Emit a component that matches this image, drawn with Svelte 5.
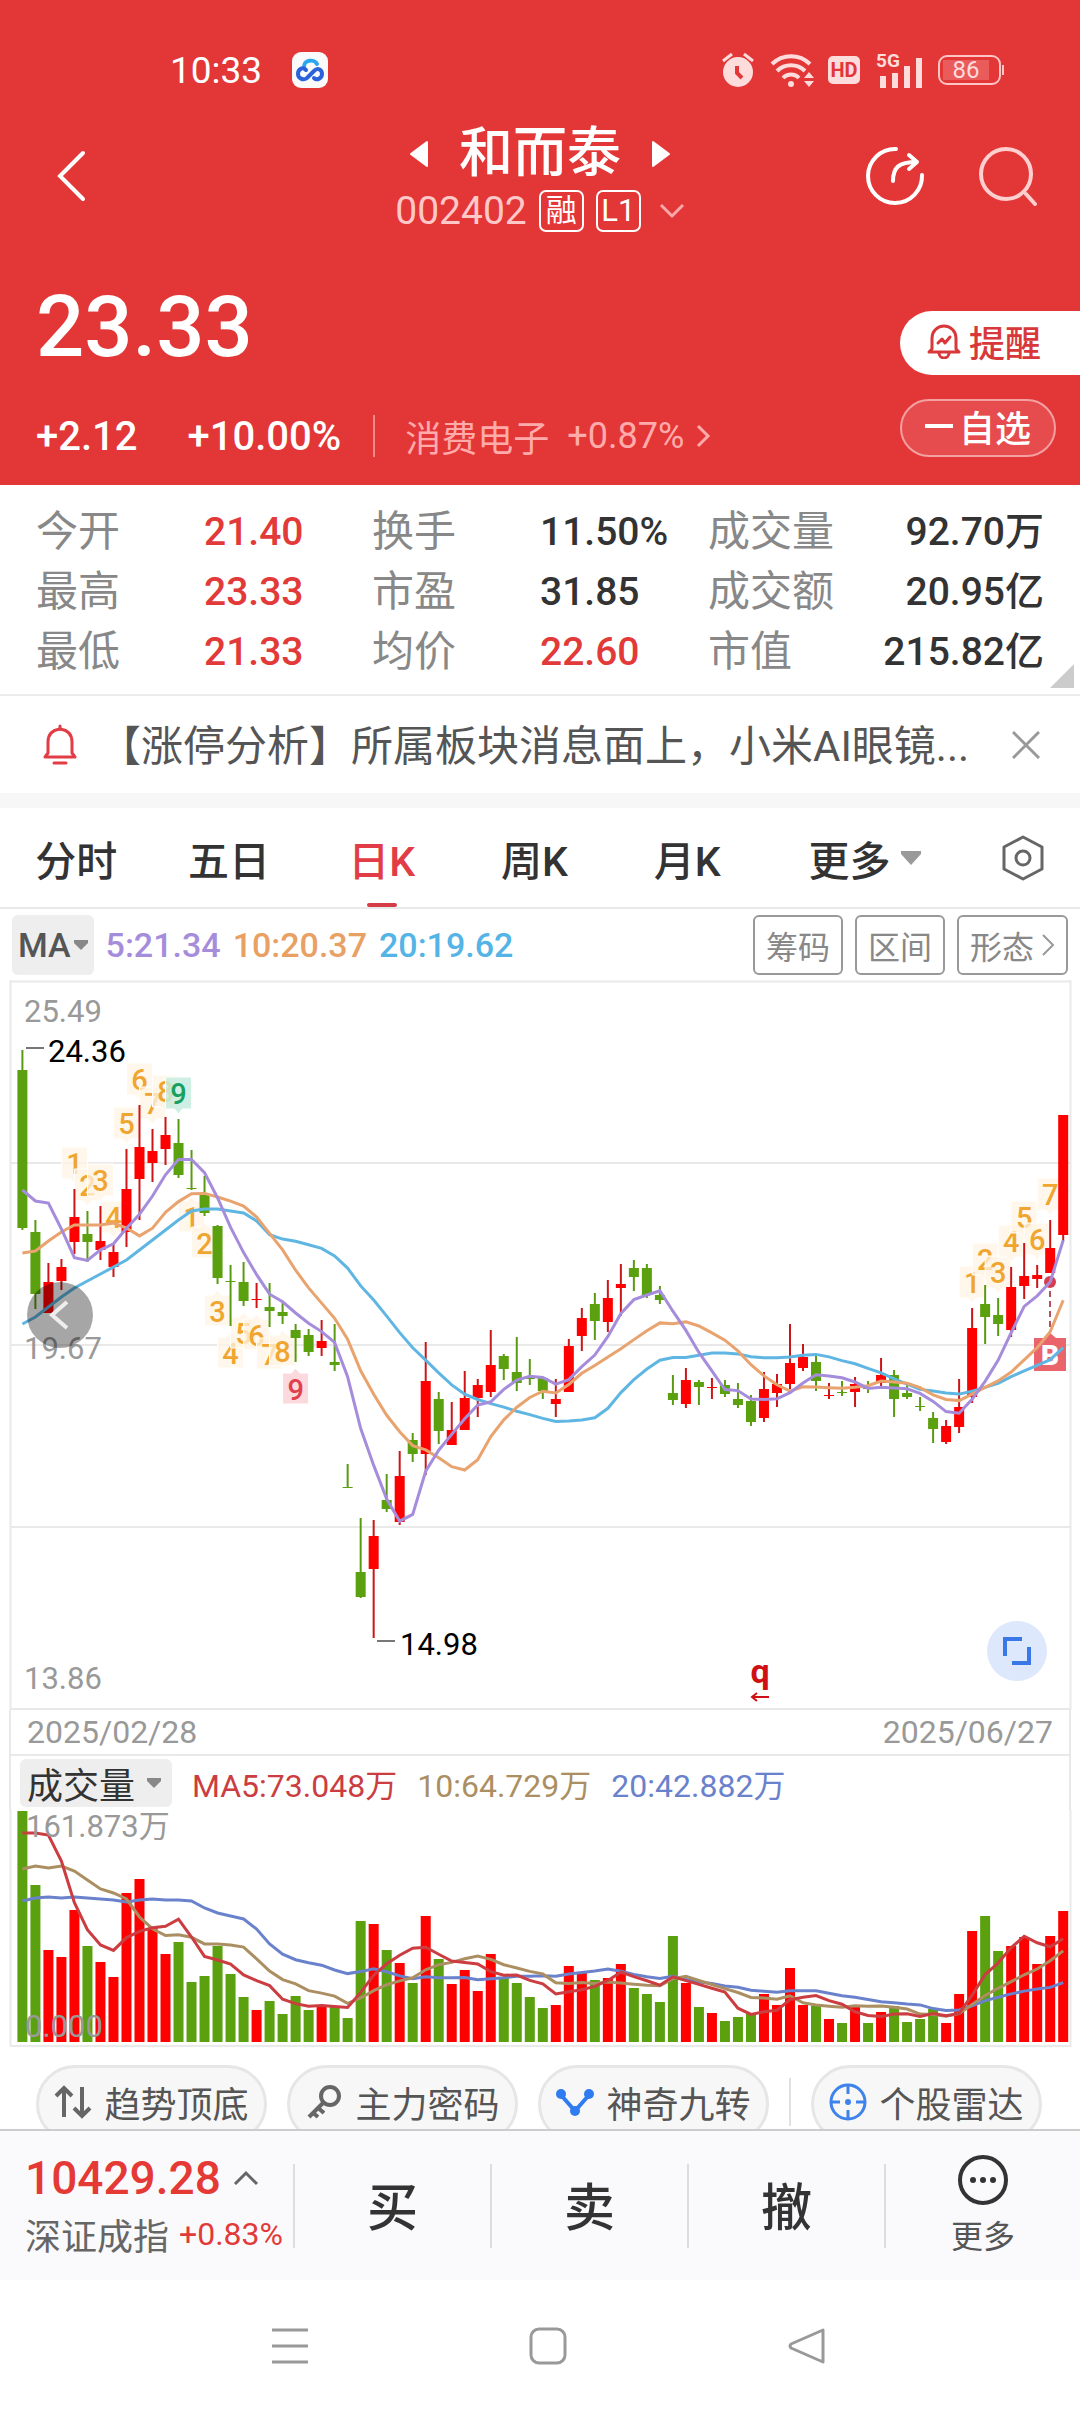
<script>
  // [high, body top, body bottom, low, rising] in chart units
  const candles = [
    [70, 90, 248, 250, 0], [240, 252, 314, 329, 0], [283, 302, 333, 333, 1], [279, 287, 301, 310, 1],
    [209, 237, 262, 274, 1], [231, 254, 262, 282, 0], [226, 261, 270, 280, 1], [263, 272, 287, 297, 1],
    [169, 209, 252, 267, 1], [125, 167, 199, 240, 1], [149, 171, 183, 202, 1], [137, 155, 169, 185, 1],
    [139, 163, 195, 198, 0], [170, 208, 209, 210, 0], [196, 215, 233, 236, 0], [245, 246, 298, 304, 0],
    [285, 301, 302, 346, 0], [282, 302, 321, 326, 0], [303, 319, 320, 328, 1], [303, 327, 331, 347, 0],
    [322, 332, 336, 344, 0], [344, 350, 358, 382, 0], [349, 355, 372, 376, 0], [340, 361, 368, 376, 1],
    [344, 382, 385, 391, 0], [484, 507, 508, 508, 0], [538, 592, 617, 618, 0], [540, 556, 589, 658, 1],
    [494, 520, 529, 532, 0], [471, 496, 542, 545, 1], [453, 460, 474, 482, 0], [362, 401, 474, 495, 1],
    [412, 419, 451, 464, 0], [422, 450, 465, 465, 1], [391, 418, 450, 450, 1], [399, 405, 418, 437, 1],
    [350, 385, 412, 417, 1], [374, 376, 389, 400, 0], [357, 392, 403, 411, 0], [379, 397, 399, 405, 0],
    [397, 398, 411, 419, 0], [399, 419, 424, 437, 1], [359, 366, 412, 412, 1], [328, 338, 356, 371, 1],
    [313, 324, 341, 360, 0], [300, 318, 342, 352, 1], [284, 304, 308, 336, 1], [280, 288, 297, 311, 0],
    [284, 288, 315, 318, 0], [306, 315, 320, 324, 0], [395, 413, 420, 425, 0], [388, 400, 424, 428, 1],
    [400, 402, 407, 425, 0], [398, 407, 408, 419, 1], [400, 405, 414, 417, 0], [403, 419, 425, 428, 0],
    [415, 421, 442, 446, 0], [392, 409, 438, 442, 1], [394, 404, 413, 427, 1], [344, 383, 404, 409, 1],
    [364, 377, 388, 391, 1], [376, 382, 401, 411, 0], [403, 415, 416, 419, 1], [401, 412, 413, 416, 0],
    [397, 404, 412, 427, 1], [401, 408, 409, 413, 0], [378, 395, 403, 406, 1], [390, 395, 419, 437, 0],
    [404, 413, 417, 419, 0], [417, 426, 427, 431, 0], [432, 438, 449, 463, 0], [440, 446, 462, 464, 1],
    [399, 427, 447, 453, 1], [328, 348, 417, 423, 1], [305, 324, 337, 364, 0], [318, 335, 344, 356, 0],
    [287, 307, 350, 357, 1], [263, 296, 306, 319, 1], [285, 295, 299, 308, 1], [240, 268, 293, 293, 1],
    [135, 135, 255, 261, 1]
  ].map(([high, top, bottom, low, up]) => ({ high, top, bottom, low, up }));

  const volumes = [
    231, 157, 92, 85, 132, 96, 80, 65, 149, 163, 114, 88, 100, 60, 66, 96, 68, 45, 32, 41,
    28, 46, 32, 35, 36, 24, 121, 118, 92, 79, 59, 126, 83, 58, 72, 51, 88, 65, 59, 45,
    34, 37, 76, 69, 62, 64, 78, 54, 48, 40, 106, 59, 35, 29, 21, 25, 28, 48, 37, 74,
    37, 36, 23, 19, 36, 19, 30, 36, 20, 23, 33, 19, 48, 111, 126, 91, 96, 105, 78, 106, 131
  ];

  const x = (i) => 22.4 + i * 13.01;

  // lead holds the averages that depend on days before the first candle
  const average = (values, n, lead) =>
    values.map((_, i) =>
      i < n - 1 ? lead[i] : values.slice(i - n + 1, i + 1).reduce((a, b) => a + b, 0) / n
    );
  const points = (ys) => ys.map((y, i) => `${x(i).toFixed(1)},${y.toFixed(1)}`).join(' ');

  const closes = candles.map((c) => (c.up ? c.top : c.bottom));
  const priceLines = [
    { color: '#5fb6e2', points: points(average(closes, 20, [344, 337, 327, 317, 308, 301, 294, 287, 280, 270, 260, 250, 240, 231, 229, 229, 231, 233, 241])) },
    { color: '#e9a36e', points: points(average(closes, 10, [273, 271, 261, 252, 245, 245, 245, 243, 248])) },
    { color: '#a58ddc', points: points(average(closes, 5, [210, 221, 223, 249])) }
  ];

  const volumeBase = 232;
  const volumePoints = (n, lead) => points(average(volumes, n, lead).map((v) => volumeBase - v));
  const volumeLines = [
    { color: '#6a82cb', points: volumePoints(20, [141, 144, 145, 144, 145, 144, 143, 142, 140, 142, 143, 142, 142, 141, 134, 129, 126, 123, 113]) },
    { color: '#ab8f62', points: volumePoints(10, [173, 176, 174, 176, 171, 162, 153, 149, 143]) },
    { color: '#cb3d40', points: volumePoints(5, [209, 209, 207, 181]) }
  ];

  // nine-turn counts: first candle, how many, side
  const badges = [
    { start: 4, count: 9, above: true },
    { start: 13, count: 9, above: false },
    { start: 73, count: 7, above: true }
  ].flatMap(({ start, count, above }) =>
    Array.from({ length: count }, (_, k) => {
      const c = candles[start + k];
      return {
        n: k + 1,
        above,
        x: x(start + k),
        y: above ? c.high - 42 : c.low + 11,
        kind: k < 8 ? 'count' : above ? 'sell' : 'buy'
      };
    })
  );

  const stats = [
    ['今开', '21.40', true], ['换手', '11.50%'], ['成交量', '92.70万'],
    ['最高', '23.33', true], ['市盈', '31.85'], ['成交额', '20.95亿'],
    ['最低', '21.33', true], ['均价', '22.60', true], ['市值', '215.82亿']
  ];

  const tabs = ['分时', '五日', '日K', '周K', '月K'];
  let activeTab = '日K';
</script>

<div class="page">
  <header>
    <div class="status">
      <span class="clock">10:33</span>
      <svg class="cloud" width="36" height="36" viewBox="0 0 36 36">
        <rect width="36" height="36" rx="9" fill="#fafafa" />
        <g fill="none" stroke-width="4" stroke-linecap="round">
          <path d="M12 16c-1-9 11-9 13-4" stroke="#2aa6ee" />
          <path d="M14 18c-4-4-8 0-8 4s5 7 9 4l7-7c4-4 8-1 8 3s-5 7-8 4" stroke="#2b62dc" />
        </g>
      </svg>
      <span class="fill"></span>
      <svg width="32" height="36" viewBox="0 0 32 36">
        <g fill="none" stroke="#ffdcdc" stroke-width="3">
          <path d="M1 9l9-7M31 9l-9-7" />
        </g>
        <circle cx="16" cy="20" r="15" fill="#ffdcdc" />
        <path d="M15 14v7l5 5" fill="none" stroke="#e33637" stroke-width="4" />
      </svg>
      <svg class="wifi" width="46" height="36" viewBox="0 0 46 36">
        <g fill="none" stroke="#ffdcdc" stroke-width="4">
          <path d="M2 12a27 27 0 0 1 38 0M7 19a20 20 0 0 1 28 0M13 26a11 11 0 0 1 16 0" />
        </g>
        <circle cx="21" cy="32" r="3" fill="#ffdcdc" />
        <path d="M34 26l5-6 5 6zM34 29h10l-5 6z" fill="#ffdcdc" />
      </svg>
      <span class="hd">HD</span>
      <svg class="signal" width="48" height="48" viewBox="0 -6 48 48">
        <text x="0" y="15" font-size="19" font-weight="700" fill="#ffdcdc">5G</text>
        <path d="M7 36v-12M19 36v-15M31 36v-22M43 36v-30" stroke="#ffdcdc" stroke-width="6" />
      </svg>
      <span class="battery"><span>86</span></span>
    </div>

    <div class="titlebar">
      <button aria-label="返回" class="back">
        <svg width="30" height="52" viewBox="0 0 30 52"><path d="M27 3L4 26l23 23" fill="none" stroke="#fff" stroke-width="4" stroke-linecap="round" /></svg>
      </button>
      <div class="name">
        <div class="name-row">
          <button aria-label="上一只"><svg width="20" height="28" viewBox="0 0 20 28"><path d="M18 2v24L2 14z" fill="#fff" stroke="#fff" stroke-width="2" stroke-linejoin="round" /></svg></button>
          <h1>和而泰</h1>
          <button aria-label="下一只"><svg width="20" height="28" viewBox="0 0 20 28"><path d="M2 2v24l16-12z" fill="#fff" stroke="#fff" stroke-width="2" stroke-linejoin="round" /></svg></button>
        </div>
        <div class="code-row">
          <span class="code">002402</span><span class="tag">融</span><span class="tag">L1</span>
          <svg width="26" height="16" viewBox="0 0 26 16"><path d="M2 2l11 11L24 2" fill="none" stroke="#f9a9a9" stroke-width="3" /></svg>
        </div>
      </div>
      <div class="tools">
        <button aria-label="分享">
          <svg width="60" height="60" viewBox="0 0 60 60">
            <g fill="none" stroke="#fff" stroke-width="4" stroke-linecap="round" stroke-linejoin="round">
              <path d="M31 3a27 27 0 1 0 26 26" />
              <path d="M28 35c0-13 5-19 24-19M44 9l8 7-8 7" />
            </g>
          </svg>
        </button>
        <button aria-label="搜索">
          <svg width="60" height="60" viewBox="0 0 60 60">
            <circle cx="29" cy="28" r="25" fill="none" stroke="#ffcfcf" stroke-width="4" />
            <path d="M49 48l9 10" stroke="#ffcfcf" stroke-width="4" stroke-linecap="round" />
          </svg>
        </button>
      </div>
    </div>

    <div class="quote">
      <div class="quote-main">
        <strong>23.33</strong>
        <div class="change">
          <span>+2.12</span><span class="pct">+10.00%</span>
          <a class="sector" href="#sector">消费电子 <b>+0.87%</b>
            <svg width="15" height="24" viewBox="0 0 15 24"><path d="M2 2l10 10L2 22" fill="none" stroke="#ffabab" stroke-width="3" /></svg>
          </a>
        </div>
      </div>
      <div class="quote-actions">
        <button class="remind">
          <svg width="34" height="36" viewBox="0 0 34 36">
            <g fill="none" stroke="#d9383a" stroke-width="3" stroke-linejoin="round" stroke-linecap="round">
              <path d="M5 26V15a12 12 0 0 1 24 0v11l3 3H2zM12 30a5 5 0 0 0 10 0" />
              <path d="M11 20l4-4 3 4 5-6" />
            </g>
          </svg>提醒
        </button>
        <button class="watch"><i></i>自选</button>
      </div>
    </div>
  </header>

  <dl class="stats">
    {#each stats as [label, value, red]}
      <div><dt>{label}</dt><dd class:red>{value}</dd></div>
    {/each}
  </dl>

  <div class="notice">
    <svg width="34" height="42" viewBox="0 0 34 42">
      <g fill="none" stroke="#e23c46" stroke-width="3" stroke-linejoin="round" stroke-linecap="round">
        <path d="M2 33l3-4V18C5 10 10 6 17 5c7 1 12 5 12 13v11l3 4z" />
        <path d="M17 5V2M11 39h12" />
      </g>
    </svg>
    <p>【涨停分析】所属板块消息面上，小米AI眼镜...</p>
    <button aria-label="关闭"><svg width="28" height="28" viewBox="0 0 28 28"><path d="M1 1l26 26M27 1L1 27" stroke="#999" stroke-width="3" /></svg></button>
  </div>

  <nav class="tabs">
    {#each tabs as tab}
      <button class:active={tab === activeTab} on:click={() => (activeTab = tab)}>{tab}</button>
    {/each}
    <button>更多 <svg width="22" height="16" viewBox="0 0 22 16"><path d="M1 1h20v3L11 15 1 4z" fill="#999" /></svg></button>
    <button aria-label="设置">
      <svg width="46" height="48" viewBox="0 0 46 48">
        <path d="M23 3l19 10v22L23 45 4 35V13z" fill="none" stroke="#666" stroke-width="3" stroke-linejoin="round" />
        <circle cx="23" cy="24" r="7" fill="none" stroke="#666" stroke-width="3" />
      </svg>
    </button>
  </nav>

  <div class="ma-bar">
    <button class="picker">MA<svg width="14" height="10" viewBox="0 0 14 10"><path d="M0 0h14v3L7 10 0 3z" fill="#888" /></svg></button>
    <span class="ma5">5:21.34</span><span class="ma10">10:20.37</span><span class="ma20">20:19.62</span>
    <span class="fill"></span>
    <button class="outline">筹码</button>
    <button class="outline">区间</button>
    <button class="outline">形态<svg width="14" height="24" viewBox="0 0 14 24"><path d="M2 2l10 10L2 22" fill="none" stroke="#999" stroke-width="2" /></svg></button>
  </div>

  <svg class="chart" viewBox="0 0 1080 730">
    <path d="M10 1.500H1071M10 183H1071M10 365H1071M10 547H1071M10 729H1071M10.500 0V730M1070.500 0V730" stroke="#e9e9e9" stroke-width="2" />
    <g font-size="31" fill="#999">
      <text x="24" y="42">25.49</text>
      <text x="24" y="379">19.67</text>
      <text x="24" y="709">13.86</text>
    </g>
    {#each badges as b}
      <g class={b.kind} transform="translate({b.x} {b.y})">
        <path d={b.above ? 'M-13 0h26v32h-9l-4 5-4-5h-9z' : 'M-13 0h9l4-5 4 5h9v31h-26z'} stroke="#fff" />
        <text x="0" y="27" font-size="29" font-weight="500" text-anchor="middle">{b.n}</text>
      </g>
    {/each}
    <path d="M1050 311V352" stroke="#b5525f" stroke-width="2" stroke-dasharray="6 4" />
    <path d="M1034 358h10l6-5 6 5h10v33h-32z" fill="#ea656b" />
    <text x="1050" y="385" font-size="28" font-weight="900" text-anchor="middle" fill="#fff">B</text>
    {#each candles as c, i}
      <g class={c.up ? 'up' : 'down'}>
        <line x1={x(i)} x2={x(i)} y1={c.high} y2={c.low} stroke-width="2" />
        <rect x={x(i) - 5} y={c.top} width="10" height={c.bottom - c.top} />
      </g>
    {/each}
    <circle cx="1050" cy="302" r="6" fill="#d93c4e" />
    {#each priceLines as line}
      <polyline points={line.points} fill="none" stroke={line.color} stroke-width="3" />
    {/each}
    <path d="M26 68H44M377 661H395" stroke="#777" stroke-width="2" />
    <g font-size="31" fill="#000">
      <text x="48" y="82">24.36</text>
      <text x="400" y="675">14.98</text>
    </g>
    <circle cx="60" cy="335" r="33" fill="#000" opacity="0.35" />
    <path d="M67 322L52 335l15 13" fill="none" stroke="#eee" stroke-width="4" />
    <text x="760" y="703" font-size="34" font-weight="700" text-anchor="middle" fill="#d00f14">q</text>
    <path d="M769 717H752M757 713l-5 4 5 4" fill="none" stroke="#d00f14" stroke-width="2" />
    <circle cx="1017" cy="671" r="30" fill="#dde8fc" />
    <path d="M1005 676V659h17M1029 667v16h-17" fill="none" stroke="#3a78e7" stroke-width="4" />
  </svg>

  <div class="dates"><span>2025/02/28</span><span>2025/06/27</span></div>

  <div class="volume-bar">
    <button class="picker">成交量<svg width="14" height="10" viewBox="0 0 14 10"><path d="M0 0h14v3L7 10 0 3z" fill="#888" /></svg></button>
    <span class="v5">MA5:73.048万</span><span class="v10">10:64.729万</span><span class="v20">20:42.882万</span>
  </div>

  <svg class="chart" viewBox="0 0 1080 238">
    <path d="M10.500 0V237M1070.500 0V237M10 236H1071" stroke="#e9e9e9" stroke-width="2" />
    {#each volumes as v, i}
      <rect class={candles[i].up ? 'up' : 'down'} x={x(i) - 5} y={volumeBase - v} width="10" height={v} />
    {/each}
    {#each volumeLines as line}
      <polyline points={line.points} fill="none" stroke={line.color} stroke-width="3" />
    {/each}
    <g font-size="31" fill="#999">
      <text x="26" y="27">161.873万</text>
      <text x="25" y="227">0.000</text>
    </g>
  </svg>

  <div class="pills">
    <button>
      <svg width="38" height="34" viewBox="0 0 38 34"><path d="M10 32V3M2 11l8-8 8 8M28 2v29M20 23l8 8 8-8" fill="none" stroke="#666" stroke-width="4" /></svg>趋势顶底
    </button>
    <button>
      <svg width="38" height="34" viewBox="0 0 38 34"><g fill="none" stroke="#666" stroke-width="4"><circle cx="25" cy="11" r="9" /><path d="M19 17L4 32M12 22l7 6M7 27l6 5" /></g></svg>主力密码
    </button>
    <button>
      <svg width="38" height="34" viewBox="0 0 38 34"><path d="M5 10l14 16L33 10" fill="none" stroke="#2f7bf0" stroke-width="4" /><g fill="#2f7bf0"><circle cx="5" cy="9" r="5" /><circle cx="19" cy="26" r="5" /><circle cx="33" cy="9" r="5" /></g></svg>神奇九转
    </button>
    <hr />
    <button>
      <svg width="38" height="38" viewBox="0 0 38 38"><g fill="none" stroke="#3e82ec" stroke-width="3"><circle cx="19" cy="19" r="17" /><path d="M19 2v9M19 27v9M2 19h9M27 19h9" /></g><circle cx="19" cy="19" r="3" fill="#3e82ec" /></svg>个股雷达
    </button>
  </div>

  <footer>
    <a class="index" href="#index">
      <span class="index-value">10429.28 <svg width="26" height="16" viewBox="0 0 26 16"><path d="M2 14L13 3l11 11" fill="none" stroke="#666" stroke-width="3" /></svg></span>
      <span class="index-name">深证成指 <b>+0.83%</b></span>
    </a>
    <button>买</button>
    <button>卖</button>
    <button>撤</button>
    <button class="more">
      <svg width="52" height="52" viewBox="0 0 52 52"><circle cx="26" cy="26" r="23" fill="none" stroke="#333" stroke-width="4" /><g fill="#333"><circle cx="16" cy="26" r="3" /><circle cx="26" cy="26" r="3" /><circle cx="36" cy="26" r="3" /></g></svg>
      更多
    </button>
  </footer>

  <div class="system-nav">
    <button aria-label="任务"><svg width="38" height="38" viewBox="0 0 38 38"><path d="M1 3h36M1 19h36M1 35h36" stroke="#999" stroke-width="3" /></svg></button>
    <button aria-label="主页"><svg width="38" height="38" viewBox="0 0 38 38"><rect x="2" y="2" width="34" height="34" rx="8" fill="none" stroke="#999" stroke-width="3" /></svg></button>
    <button aria-label="后退"><svg width="38" height="38" viewBox="0 0 38 38"><path d="M36 3v32L4 21q-2-2 0-4z" fill="none" stroke="#999" stroke-width="3" stroke-linejoin="round" /></svg></button>
  </div>
</div>

<style>
  :global(body) {
    background: #fff;
  }

  .page {
    font-family: Roboto, "Noto Sans CJK SC", sans-serif;
    color: #333;
    overflow: hidden;
  }

  button {
    font: inherit;
    color: inherit;
    background: none;
    border: 0;
    padding: 0;
    margin: 0;
    display: flex;
    align-items: center;
    justify-content: center;
    cursor: pointer;
  }

  a {
    color: inherit;
    text-decoration: none;
  }

  b {
    font-weight: 400;
  }

  svg {
    display: block;
    flex: none;
  }

  .fill {
    flex: 1;
  }

  .red {
    color: #e23a38;
  }

  header {
    background: #e33637;
    color: #fff;
    height: 485px;
  }

  .status {
    display: flex;
    align-items: center;
    height: 140px;
    padding: 0 74px 0 170px;
    box-sizing: border-box;
  }

  .clock {
    font-size: 37px;
  }

  .cloud {
    margin-left: 30px;
  }

  .wifi {
    margin-left: 16px;
  }

  .hd {
    margin-left: 12px;
    width: 32px;
    height: 28px;
    line-height: 28px;
    border-radius: 5px;
    background: #ffdcdc;
    color: #e33637;
    font-size: 20px;
    font-weight: 700;
    text-align: center;
  }

  .signal {
    margin-left: 16px;
  }

  .battery {
    position: relative;
    margin: 0 5px 0 14px;
    width: 63px;
    height: 30px;
    box-sizing: border-box;
    border: 2px solid #ffc4c4;
    border-radius: 9px;
    padding: 3px 10px 3px 3px;
    font-size: 24px;
    line-height: 20px;
    text-align: center;
    color: #ffdcdc;
  }

  .battery::after {
    content: '';
    position: absolute;
    right: -5px;
    top: 8px;
    width: 2px;
    height: 10px;
    background: #ffc4c4;
  }

  .battery span {
    display: block;
    background: #ea5b5c;
  }

  .titlebar {
    display: grid;
    grid-template-columns: 1fr auto 1fr;
    align-items: start;
    height: 122px;
  }

  .back {
    justify-self: start;
    margin: 10px 0 0 56px;
  }

  .name-row,
  .code-row {
    display: flex;
    align-items: center;
    justify-content: center;
  }

  .name-row {
    margin-top: -18px;
    height: 64px;
    gap: 30px;
  }

  h1 {
    margin: 0;
    font-size: 54px;
    line-height: 64px;
    font-weight: 500;
  }

  .code-row {
    height: 50px;
    gap: 12px;
  }

  .code {
    font-size: 39px;
    color: #ffc8c8;
  }

  .tag {
    width: 41px;
    height: 38px;
    line-height: 38px;
    border: 2px solid #fff;
    border-radius: 7px;
    font-size: 31px;
    text-align: center;
  }

  .code-row svg {
    margin-left: 6px;
  }

  .tools {
    display: flex;
    justify-content: flex-end;
    gap: 52px;
    padding: 6px 43px 0 0;
  }

  .quote {
    display: flex;
    justify-content: space-between;
  }

  .quote-main {
    padding: 15px 0 0 36px;
  }

  strong {
    display: block;
    font-size: 85px;
    line-height: 100px;
    font-weight: 500;
  }

  .change {
    display: flex;
    align-items: center;
    height: 42px;
    margin-top: 38px;
    font-size: 40px;
    font-weight: 500;
  }

  .pct {
    margin-left: 50px;
  }

  .sector {
    display: flex;
    align-items: center;
    gap: 12px;
    height: 42px;
    margin-left: 32px;
    padding-left: 30px;
    border-left: 2px solid #f08a8a;
    font-size: 36px;
    font-weight: 400;
    color: #ffabab;
  }

  .sector b {
    margin-left: 6px;
  }

  .quote-actions {
    display: flex;
    flex-direction: column;
    gap: 24px;
    width: 180px;
    padding-top: 49px;
  }

  .remind,
  .watch {
    box-sizing: border-box;
    padding-bottom: 4px;
    font-size: 36px;
    font-weight: 500;
  }

  .remind {
    height: 64px;
    justify-content: flex-start;
    gap: 8px;
    padding-left: 27px;
    border-radius: 32px 0 0 32px;
    background: #fff;
    color: #d9383a;
  }

  .watch {
    width: 156px;
    height: 58px;
    gap: 6px;
    border: 2px solid #f3a0a0;
    border-radius: 29px;
    background: #e64c4d;
  }

  .watch i {
    width: 28px;
    height: 4px;
    background: #fff;
  }

  .stats {
    position: relative;
    display: grid;
    grid-template-columns: repeat(3, 1fr);
    grid-auto-rows: 60px;
    margin: 0;
    padding: 17px 36px 12px;
    border-bottom: 2px solid #ebebeb;
    line-height: 60px;
    font-size: 42px;
  }

  .stats::after {
    content: '';
    position: absolute;
    right: 6px;
    bottom: 6px;
    border: 12px solid #ccc;
    border-left-color: transparent;
    border-top-color: transparent;
  }

  .stats > div {
    display: flex;
  }

  dt {
    flex: 1;
    color: #888;
    white-space: nowrap;
  }

  dd {
    flex: 1;
    margin: 0;
    font-size: 39px;
    font-weight: 500;
    white-space: nowrap;
  }

  .stats > div:nth-child(3n) dd {
    text-align: right;
  }

  .notice {
    display: flex;
    align-items: center;
    height: 97px;
    padding: 0 40px 0 43px;
    border-bottom: 15px solid #f7f7f7;
    font-size: 42px;
    color: #555;
  }

  .notice p {
    flex: 1;
    margin: 4px 0 0 22px;
    overflow: hidden;
    white-space: nowrap;
    line-height: 60px;
  }

  .tabs {
    display: grid;
    grid-template-columns: repeat(5, 153fr) 204fr 111fr;
    height: 99px;
    padding-right: 2px;
    font-size: 41px;
    font-weight: 500;
  }

  .tabs button {
    position: relative;
    gap: 10px;
  }

  .tabs .active {
    color: #e23c46;
  }

  .active::after {
    content: '';
    position: absolute;
    left: calc(50% - 15px);
    bottom: 0;
    width: 30px;
    height: 4px;
    border-radius: 2px;
    background: #d43c46;
  }

  .ma-bar {
    display: flex;
    align-items: center;
    gap: 12px;
    height: 71px;
    padding: 0 12px;
    border-top: 2px solid #e9e9e9;
    font-size: 34px;
    font-weight: 500;
  }

  .picker {
    gap: 3px;
    border-radius: 6px;
    background: #eee;
  }

  .ma-bar .picker {
    height: 60px;
    padding: 0 6px;
    color: #555;
  }

  .ma5 { color: #a58ddc; }
  .ma10 { color: #e9a063; }
  .ma20 { color: #55b4e6; }

  .outline {
    height: 60px;
    box-sizing: border-box;
    padding: 0 11px;
    gap: 7px;
    border: 2px solid #999;
    border-radius: 6px;
    color: #888;
    font-size: 32px;
    font-weight: 400;
  }

  .chart {
    width: 100%;
    height: auto;
    overflow: visible;
  }

  .up { fill: #ff0000; stroke: none; }
  .down { fill: #5aa00f; stroke: none; }
  .up line { stroke: #cc1518; }
  .down line { stroke: #5a9a12; }
  .count path { fill: #fff4e4; fill-opacity: 0.75; }
  .count text { fill: #efa52f; }
  .sell path { fill: #c8ecdf; fill-opacity: 0.85; }
  .sell text { fill: #17a060; }
  .buy path { fill: #fcd9dc; }
  .buy text { fill: #e0404c; }

  .dates {
    display: flex;
    align-items: center;
    justify-content: space-between;
    height: 44px;
    margin: 0 9px;
    padding: 0 16px;
    border: 2px solid #e9e9e9;
    border-top: 0;
    font-size: 32px;
    color: #999;
  }

  .volume-bar {
    display: flex;
    align-items: center;
    gap: 20px;
    height: 54px;
    margin: 0 9px;
    padding-left: 9px;
    border: solid #e9e9e9;
    border-width: 0 2px;
    font-size: 32px;
  }

  .volume-bar .picker {
    height: 48px;
    gap: 12px;
    padding: 0 11px 0 7px;
    font-size: 36px;
  }

  .v5 { color: #cb3d40; }
  .v10 { color: #ab8f62; }
  .v20 { color: #6a82cb; }

  .pills {
    display: flex;
    gap: 20px;
    height: 64px;
    padding: 17px 38px 0 36px;
    overflow: hidden;
  }

  .pills button {
    flex: 1;
    height: 78px;
    box-sizing: border-box;
    gap: 12px;
    padding-bottom: 4px;
    border: 3px solid #e6e6e6;
    border-radius: 39px;
    background: #f7f7f7;
    font-size: 36px;
    color: #555;
    white-space: nowrap;
  }

  hr {
    width: 2px;
    height: 48px;
    margin: 13px 0 0;
    border: 0;
    background: #e0e0e0;
  }

  footer {
    display: grid;
    grid-template-columns: 293fr repeat(3, 197fr) 196fr;
    align-items: center;
    height: 149px;
    border-top: 2px solid #ccc;
    background: #fafafc;
  }

  footer button {
    box-sizing: border-box;
    height: 84px;
    padding-bottom: 4px;
    border-left: 2px solid #ddd;
    font-size: 51px;
    font-weight: 500;
  }

  footer .more {
    flex-direction: column;
    gap: 10px;
    padding: 0;
    font-size: 32px;
    line-height: 42px;
    font-weight: 400;
    color: #555;
  }

  .index {
    padding-left: 25px;
    white-space: nowrap;
  }

  .index-value,
  .index-name {
    display: flex;
    align-items: center;
    height: 56px;
    gap: 12px;
  }

  .index-value {
    font-size: 46px;
    font-weight: 500;
    color: #e53935;
  }

  .index-name {
    gap: 10px;
    font-size: 36px;
    color: #666;
  }

  .index-name b {
    font-size: 32px;
    color: #e23a38;
  }

  .system-nav {
    display: flex;
    align-items: center;
    justify-content: center;
    gap: 220px;
    height: 131px;
    padding-left: 16px;
  }
</style>
